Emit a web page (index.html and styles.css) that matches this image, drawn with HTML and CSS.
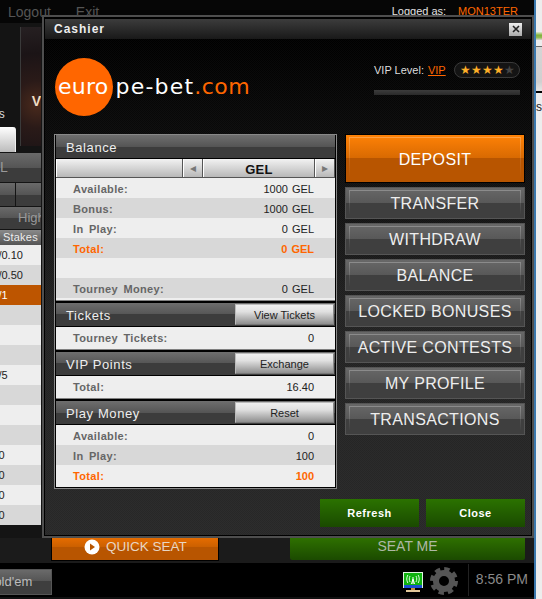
FILE: index.html
```html
<!DOCTYPE html>
<html lang="en">
<head>
<meta charset="utf-8">
<title>Cashier</title>
<link rel="stylesheet" href="styles.css">
</head>
<body>
<div class="screen">
  <div class="lobby">
    <header class="topbar">
      <nav class="topnav"><span>Logout</span><span>Exit</span></nav>
      <div class="login"><span class="login-label">Logged as:</span><span class="login-name">MON13TER</span></div>
    </header>
    <div class="main">
      <aside class="sidebar">
        <div class="promo-area">
          <div class="promo-left">
            <span class="promo-label">Tables</span>
            <span class="white-tab"></span>
          </div>
          <div class="promo"><span class="promo-v">V</span></div>
        </div>
        <div class="bar bar-all"><span>ALL</span></div>
        <div class="sub-bars"><span class="bar sub-a"></span><span class="bar sub-b"></span></div>
        <div class="bar bar-high"><span>High</span></div>
        <div class="stakes-head">Stakes</div>
        <div class="stake">0.05/0.10</div>
        <div class="stake alt">0.25/0.50</div>
        <div class="stake active">0.50/1</div>
        <div class="stake alt"></div>
        <div class="stake"></div>
        <div class="stake alt"></div>
        <div class="stake">2.50/5</div>
        <div class="stake alt"></div>
        <div class="stake"></div>
        <div class="stake alt"></div>
        <div class="stake">10/20</div>
        <div class="stake alt">15/30</div>
        <div class="stake">25/50</div>
        <div class="stake alt">30/60</div>
      </aside>
    </div>
    <div class="actions">
      <div class="quick-seat">
        <svg class="play-icon" width="16" height="16" viewBox="0 0 16 16"><circle cx="8" cy="8" r="7.5" fill="#fff"/><path d="M6 4.5 11 8 6 11.5Z" fill="#b85500"/></svg>
        <span>QUICK SEAT</span>
      </div>
      <div class="seat-me">SEAT ME</div>
    </div>
    <footer class="taskbar">
      <div class="game-tab"><span>Hold'em</span></div>
      <svg class="net-icon" width="20" height="21" viewBox="0 0 20 21">
        <rect x="0.5" y="0.5" width="19" height="15" fill="#0fb30f" stroke="#dff5df"/>
        <rect x="1" y="13" width="18" height="3" fill="#1b4fd0"/>
        <path d="M10 5V12M8.5 12 10 7 11.5 12" stroke="#fff" stroke-width="1" fill="none"/>
        <path d="M7 4C6 6 6 8 7 10M13 4C14 6 14 8 13 10M4.8 3C3.4 6 3.4 8 4.8 11M15.200 3C16.600 6 16.600 8 15.200 11" stroke="#d8ffd8" fill="none"/>
        <rect x="8" y="16" width="4" height="2" fill="#c98a3a"/>
        <rect x="3" y="18" width="14" height="2" fill="#e2c89a"/>
      </svg>
      <svg class="gear-icon" width="28" height="28" viewBox="0 0 28 28">
        <circle cx="14" cy="14" r="8" fill="none" stroke="#555" stroke-width="6"/>
        <circle cx="14" cy="14" r="12" fill="none" stroke="#555" stroke-width="4" stroke-dasharray="5.4 4"/>
      </svg>
      <span class="divider"></span>
      <span class="clock">8:56 PM</span>
    </footer>
  </div>
  <div class="edge">
    <div class="thumb-green"></div>
    <div class="thumb-text"></div>
    <div class="thumb-rule"></div>
    <div class="thumb-letter">s</div>
  </div>

  <section class="modal">
    <div class="titlebar">
      <span class="title">Cashier</span>
      <button class="close-x" type="button" aria-label="Close">
        <svg width="8" height="8" viewBox="0 0 8 8"><path d="M1 1 7 7M7 1 1 7" stroke="#222" stroke-width="1.600"/></svg>
      </button>
    </div>
    <div class="modal-body">
      <div class="brand-row">
        <div class="logo"><span class="logo-text"><span class="logo-euro">euro</span><span class="logo-pe">pe-bet</span><em>.com</em></span></div>
        <div class="vip">
          <div class="vip-line">
            <span class="vip-label">VIP Level:</span>
            <a class="vip-link">VIP</a>
            <span class="stars"><i>★</i><i>★</i><i>★</i><i>★</i><i class="off">★</i></span>
          </div>
          <div class="vip-bar"></div>
        </div>
      </div>
      <div class="columns">
        <div class="panel">
          <div class="section">
            <div class="section-head"><span>Balance</span></div>
            <div class="selector">
              <span class="sel-blank"></span>
              <span class="sel-arrow">◂</span>
              <span class="sel-name">GEL</span>
              <span class="sel-arrow">▸</span>
            </div>
            <div class="rows">
              <div class="row"><span>Available:</span><b>1000 GEL</b></div>
              <div class="row alt"><span>Bonus:</span><b>1000 GEL</b></div>
              <div class="row"><span>In Play:</span><b>0 GEL</b></div>
              <div class="row alt total"><span>Total:</span><b>0 GEL</b></div>
              <div class="row"></div>
              <div class="row alt"><span>Tourney Money:</span><b>0 GEL</b></div>
            </div>
          </div>
          <div class="section">
            <div class="section-head"><span>Tickets</span><button class="head-btn" type="button">View Tickets</button></div>
            <div class="row tall"><span>Tourney Tickets:</span><b>0</b></div>
          </div>
          <div class="section">
            <div class="section-head"><span>VIP Points</span><button class="head-btn" type="button">Exchange</button></div>
            <div class="row tall"><span>Total:</span><b>16.40</b></div>
          </div>
          <div class="section last">
            <div class="section-head"><span>Play Money</span><button class="head-btn" type="button">Reset</button></div>
            <div class="rows">
              <div class="row"><span>Available:</span><b>0</b></div>
              <div class="row alt"><span>In Play:</span><b>100</b></div>
              <div class="row total"><span>Total:</span><b>100</b></div>
            </div>
          </div>
        </div>
        <div class="side">
          <button class="big-btn deposit" type="button">DEPOSIT</button>
          <button class="big-btn" type="button">TRANSFER</button>
          <button class="big-btn" type="button">WITHDRAW</button>
          <button class="big-btn" type="button">BALANCE</button>
          <button class="big-btn" type="button">LOCKED BONUSES</button>
          <button class="big-btn" type="button">ACTIVE CONTESTS</button>
          <button class="big-btn" type="button">MY PROFILE</button>
          <button class="big-btn" type="button">TRANSACTIONS</button>
        </div>
      </div>
      <div class="modal-foot">
        <button class="green-btn" type="button">Refresh</button>
        <button class="green-btn" type="button">Close</button>
      </div>
    </div>
  </section>
</div>
</body>
</html>
```

FILE: styles.css
```css
* { box-sizing: border-box; }
html, body { margin: 0; padding: 0; }
body { background: #000; font-family: "Liberation Sans", Arial, sans-serif; }
button { font-family: inherit; padding: 0; cursor: pointer; }

.screen { position: relative; display: flex; width: 542px; height: 599px; overflow: hidden; }

/* Lobby behind the dialog */
.lobby { display: flex; flex-direction: column; width: 534px; height: 599px; background: #000; }

.topbar { display: flex; justify-content: space-between; height: 23px; padding: 0 16px 0 8px; background: #060606; }
.topnav { display: flex; gap: 25px; padding-top: 4px; font-size: 14px; line-height: 16px; color: #555; }
.login { display: flex; gap: 12px; padding-top: 5px; font-size: 11px; line-height: 13px; }
.login-label { color: #e2e2e2; }
.login-name { color: #f60; }

.main { height: 515px; background: #141414; }
.sidebar { width: 41px; height: 515px; overflow: hidden; background: #141414; }

.promo-area { display: grid; grid-template-columns: 20px 21px; height: 130px; }
.promo-left { display: flex; flex-direction: column; align-items: flex-start; overflow: hidden; }
.promo-label { margin-top: 85px; height: 19px; font-size: 12px; line-height: 13px; color: #ddd; text-indent: -30px; white-space: nowrap; }
.white-tab { width: 16px; height: 25px; background: linear-gradient(#fff, #bcbcbc); border-radius: 0 3px 0 0; border-right: 1px solid #eee; }
.promo { display: flex; align-items: flex-end; justify-content: flex-end; height: 119px; margin-top: 4px; padding: 0 0 37px; overflow: hidden;
  background: radial-gradient(circle at 80% 65%, #4a2a1c 0, #2a1a18 30%, #1b1416 65%, #262022 100%); border-left: 1px solid #3a3a3a; }
.promo-v { font-size: 14px; line-height: 15px; font-weight: bold; color: #efdcc4; }

.bar { background: linear-gradient(#6a6a6a 0, #555 50%, #3c3c3c 50%, #3c3c3c 100%); }
.bar-all { height: 29px; margin-bottom: 1px; overflow: hidden; font-size: 14px; line-height: 29px; color: #999; white-space: nowrap; text-indent: -17px; }
.sub-bars { display: flex; gap: 1px; height: 23px; margin-bottom: 1px; }
.sub-a { width: 15px; }
.sub-b { width: 25px; }
.bar-high { height: 22px; margin-bottom: 1px; overflow: hidden; font-size: 13px; line-height: 22px; color: #999; padding-left: 18px; white-space: nowrap; }
.stakes-head { height: 15px; padding-left: 3px; background: linear-gradient(#8a8a8a, #555); font-size: 11px; line-height: 15px; color: #eee; white-space: nowrap; letter-spacing: .2px; }
.stake { height: 20px; background: #eee; color: #222; font-size: 11px; line-height: 20px; text-indent: -23px; white-space: nowrap; overflow: hidden; }
.stake.alt { background: #d8d8d8; }
.stake.active { background: #bd5500; color: #fff; }

.actions { display: flex; align-items: flex-start; height: 25px; padding-left: 51px; background: #1b1b1b; }
.quick-seat { display: flex; align-items: center; gap: 6px; width: 168px; height: 23px; padding: 0 0 5px 32px; border: 1px solid #000; border-top: 0;
  background: linear-gradient(#e56c00 0, #cc6000 40%, #b85500 40%, #b85500 100%); font-size: 13.5px; color: #e8d6c4; }
.seat-me { width: 235px; height: 22px; margin-left: 71px; padding-bottom: 5px; text-align: center; border-radius: 0 0 2px 2px;
  background: linear-gradient(#2e7000, #1b4a00); font-size: 14px; line-height: 17px; color: #aeb8a6; }

.taskbar { display: flex; align-items: flex-start; height: 36px; padding-right: 6px; background: #000; border-bottom: 2px solid #101010; }
.game-tab { width: 52px; height: 26px; margin: 6px auto 0 0; overflow: hidden; border: 1px solid #555; border-left: 0;
  background: linear-gradient(#6a6a6a 0, #555 45%, #3e3e3e 45%, #3e3e3e 100%); font-size: 13px; line-height: 24px; color: #bbb; text-indent: -15px; white-space: nowrap; }
.net-icon { margin-top: 9px; }
.gear-icon { margin: 4px 0 0 7px; }
.divider { width: 1px; height: 32px; margin: 1px 0 0 10px; background: #222; }
.clock { margin: 8px 0 0 7px; font-size: 14px; line-height: 16px; color: #8a8a8a; white-space: nowrap; }

/* Sliver of the desktop to the right of the client */
.edge { width: 8px; height: 599px; overflow: hidden; border-left: 2px solid #3b78ad; background: #ededed; }
.thumb-green { height: 8px; margin-top: 32px; background: linear-gradient(#dfe8d0 0, #7fb23a 40%, #93bb55 70%, #d8d8d8 100%); }
.thumb-rule, .thumb-text { background: #000; }
.thumb-green + .thumb-text { height: 45px; margin-top: 6px; background: linear-gradient(#6a6a6a 0, #6a6a6a 3%, #d5d5d5 3%, #d0d0d0 80%, #e6e6e6 100%); }
.thumb-rule { height: 2px; }
.thumb-letter { margin-top: 8px; font-size: 12px; line-height: 12px; color: #222; }

/* Cashier dialog */
.modal { position: absolute; left: 42px; top: 15px; width: 492px; height: 523px; display: flex; flex-direction: column; padding: 2px 1px 1px; border: 2px solid #4e4e4e; background: #000; }

.titlebar { display: flex; align-items: center; justify-content: space-between; flex: none; height: 20px; padding: 0 9px 0 9px; background: linear-gradient(#3c3c3c, #191919); }
.title { font-size: 12px; font-weight: bold; letter-spacing: 1px; color: #eee; }
.close-x { display: flex; align-items: center; justify-content: center; width: 13px; height: 13px; border: 0; background: linear-gradient(#eee, #aaa); }

.modal-body { flex: 1; display: flex; flex-direction: column; padding: 0 6px 0 9px;
  background:
    repeating-conic-gradient(rgba(255,255,255,.025) 0 25%, transparent 0 50%) 0 0 / 2px 2px,
    linear-gradient(#000 0, #0b0b0b 20%, #222 55%, #282828 100%); }

.brand-row { display: flex; justify-content: space-between; height: 95px; flex: none; }
.logo { position: relative; width: 200px; height: 58px; margin-top: 19px; }
.logo::before { content: ""; position: absolute; left: 1px; top: 0; width: 58px; height: 58px; border-radius: 50%; background: #f60; }
.logo-text { position: absolute; left: 4px; top: 14px; display: flex; font-family: "DejaVu Sans", sans-serif; font-size: 22px; line-height: 30px; color: #fff; white-space: nowrap; }
.logo-euro { margin-right: 7px; letter-spacing: .25px; }
.logo-pe { letter-spacing: 1.200px; }
.logo-text em { font-style: normal; letter-spacing: .5px; color: #f60; }

.vip { width: 146px; margin-right: 5px; padding-top: 23px; }
.vip-line { display: flex; align-items: center; height: 16px; font-size: 11px; color: #ddd; }
.vip-link { margin-left: 4px; color: #f60; text-decoration: underline; }
.stars { display: flex; justify-content: center; width: 66px; height: 16px; margin-left: auto; border: 1px solid #3a3a3a; border-radius: 8px; background: #141414; font-size: 12px; line-height: 14px; }
.stars i { width: 11px; text-align: center; font-style: normal; color: #ffb028; }
.stars i.off { color: #444; }
.vip-bar { height: 5px; margin-top: 12px; background: linear-gradient(#3c3c3c, #2a2a2a); }

.columns { display: flex; justify-content: space-between; align-items: flex-start; flex: none; }

.panel { width: 283px; padding: 0 1px; border: 1px solid #888; background: #000; }
.section { margin-bottom: 2px; border-bottom: 1px solid #808080; }
.section.last { margin-bottom: 0; border-bottom-color: #000; }
.section-head { display: flex; align-items: center; justify-content: space-between; height: 23px; margin-bottom: 1px; padding: 0 1px 0 10px;
  background: linear-gradient(#6e6e6e 0, #555 50%, #3c3c3c 50%, #3c3c3c 100%); font-size: 13px; letter-spacing: .6px; color: #eee; }
.section-head > span { padding-top: 2px; }
.head-btn { width: 99px; height: 21px; border: 1px solid #bbb; border-right-color: #888; border-bottom-color: #777; background: linear-gradient(#efefef, #e0e0e0 35%, #8e8e8e); font-size: 11px; letter-spacing: 0; color: #222; }

.selector { display: flex; height: 19px; margin-top: 1px; border-bottom: 1px solid #555; background: linear-gradient(#f2f2f2, #b8b8b8); }
.selector > span { display: block; height: 18px; border-right: 1px solid #555; border-left: 1px solid #fff; }
.sel-blank { width: 127px; }
.sel-arrow { width: 20px; text-align: center; font-size: 12px; line-height: 19px; color: #777; }
.sel-name { width: 112px; text-align: center; font-size: 13px; font-weight: bold; line-height: 22px; color: #111; letter-spacing: .3px; }

.rows { padding-bottom: 2px; background: #eee; }
.row { display: flex; justify-content: space-between; height: 20px; padding: 0 21px 0 17px; background: #eee; font-size: 11px; line-height: 22px; color: #222; }
.row.alt { background: #d8d8d8; }
.row.tall { height: 22px; line-height: 23px; }
.row span { font-weight: bold; color: #666; letter-spacing: .35px; word-spacing: 2px; }
.row b { font-weight: normal; word-spacing: 1px; }
.row.total span, .row.total b { font-weight: bold; color: #f60; }

.side { display: flex; flex-direction: column; gap: 4px; width: 180px; }
.big-btn { position: relative; height: 32px; padding-top: 2px; border: 1px solid #555; background: linear-gradient(#686868 0, #585858 50%, #3f3f3f 50%, #3f3f3f 100%); font-size: 16px; letter-spacing: .35px; color: #eee; white-space: nowrap; }
.big-btn::before { content: ""; position: absolute; inset: 2px 3px 3px; border: 1px solid rgba(255,255,255,.25); border-bottom: 0;
  -webkit-mask-image: linear-gradient(#000, transparent); mask-image: linear-gradient(#000, transparent); }
.deposit { height: 49px; border: 1px solid #000; background: linear-gradient(#ff8206 0, #d96a02 48%, #b85500 48%, #b85500 100%); color: #fff; }

.modal-foot { display: flex; justify-content: flex-end; gap: 7px; margin-top: 10px; }
.green-btn { width: 99px; height: 28px; border: 0; background: linear-gradient(#2b7200, #1a4a00); font-size: 11px; font-weight: bold; letter-spacing: .5px; color: #fff; }
```
